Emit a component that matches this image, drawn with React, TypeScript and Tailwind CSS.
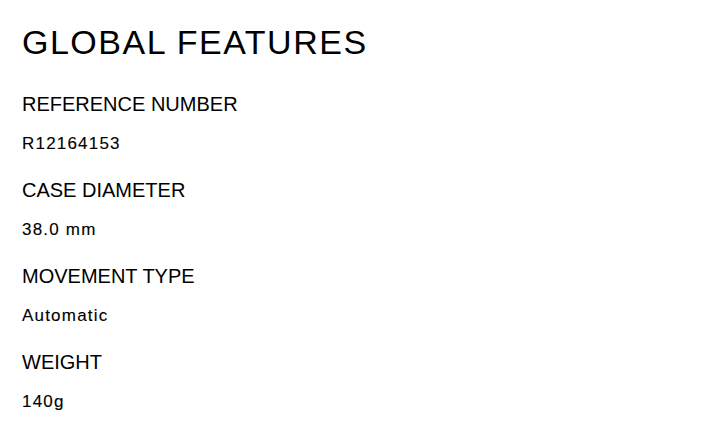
const features = [
  { label: "REFERENCE NUMBER", value: "R12164153" },
  { label: "CASE DIAMETER", value: "38.0 mm" },
  { label: "MOVEMENT TYPE", value: "Automatic" },
  { label: "WEIGHT", value: "140g" },
];

export default function App() {
  return (
    <div className="min-h-screen bg-white text-black pl-[22px] pt-[25px]" style={{ fontFamily: '"Liberation Sans", Arial, sans-serif' }}>
      <h1 className="text-[34px] leading-none tracking-[1.5px] font-normal">GLOBAL FEATURES</h1>
      <div className="mt-[34.5px] flex flex-col gap-[27.5px]">
        {features.map((f) => (
          <div key={f.label}>
            <h2 className="text-[20px] leading-none font-normal">{f.label}</h2>
            <p className="mt-[21.5px] text-[17px] leading-none tracking-[1.2px] [-webkit-text-stroke:0.12px_black]">{f.value}</p>
          </div>
        ))}
      </div>
    </div>
  );
}
